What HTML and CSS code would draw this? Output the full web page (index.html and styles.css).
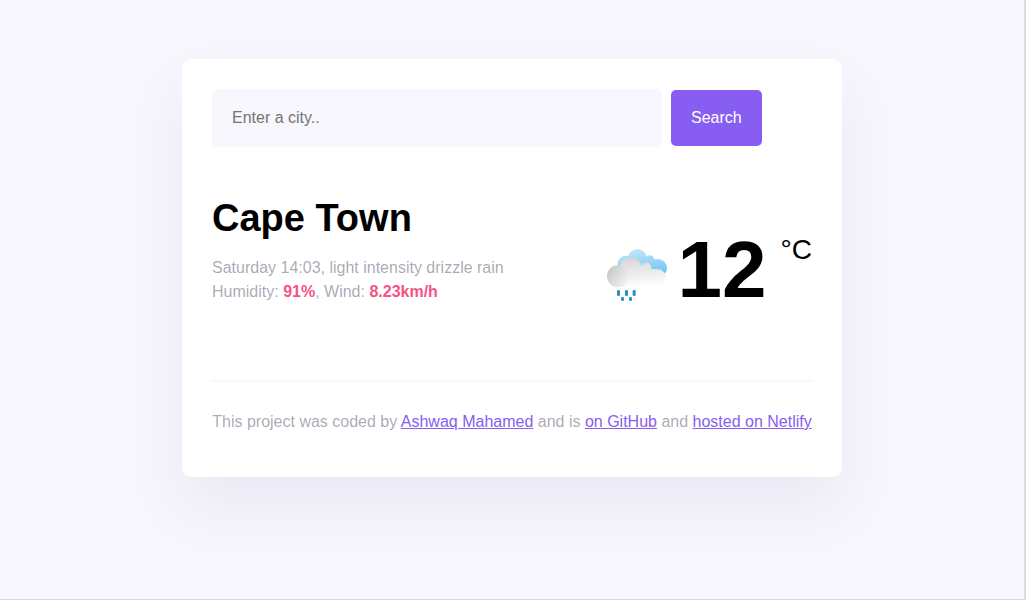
FILE: index.html
```html
<!DOCTYPE html>
<html lang="en">
<head>
<meta charset="utf-8">
<title>Weather App</title>
<link rel="stylesheet" href="styles.css">
</head>
<body>
<div class="weather-app">
  <header>
    <form class="search-form">
      <input type="search" class="search-input" placeholder="Enter a city.." aria-label="City" required>
      <button type="submit" class="search-button">Search</button>
    </form>
  </header>
  <main class="current">
    <div>
      <h1 class="city">Cape Town</h1>
      <p class="details">Saturday 14:03, light intensity drizzle rain<br>Humidity: <strong>91%</strong>, Wind: <strong>8.23km/h</strong></p>
    </div>
    <div class="temperature">
      <svg class="icon" viewBox="30 36 186 162" role="img" aria-label="Rain">
        <defs>
          <linearGradient id="sky" gradientUnits="userSpaceOnUse" x1="115" y1="38" x2="130" y2="124">
            <stop offset="0" stop-color="#c5e6fb"/><stop offset="1" stop-color="#72c4f4"/>
          </linearGradient>
          <linearGradient id="cloud" gradientUnits="userSpaceOnUse" x1="120" y1="64" x2="128" y2="154">
            <stop offset="0" stop-color="#d6d6d6"/><stop offset="1" stop-color="#ffffff"/>
          </linearGradient>
          <linearGradient id="puff" gradientUnits="userSpaceOnUse" x1="42" y1="96" x2="96" y2="134">
            <stop offset="0" stop-color="#c9c9c9"/><stop offset="1" stop-color="#f1f1f1"/>
          </linearGradient>
        </defs>
        <g fill="url(#sky)">
          <circle cx="90" cy="84" r="25"/><circle cx="124" cy="67" r="28"/><circle cx="161" cy="72" r="14"/><circle cx="186" cy="96" r="27"/>
          <path d="M90 70h90v50H90z"/>
        </g>
        <path fill="url(#cloud)" d="M65 154V88h7a34 34 0 0 1 65 2a14 14 0 0 1 28 9h18a27 27 0 0 1 0 55z"/>
        <circle cx="66" cy="121" r="33" fill="url(#puff)"/>
        <g fill="#2b8fca">
          <rect x="63" y="162" width="9" height="18" rx="4"/><rect x="87" y="162" width="9" height="18" rx="4"/><rect x="110" y="162" width="9" height="18" rx="4"/>
          <rect x="75" y="183" width="9" height="12" rx="4"/><rect x="99" y="183" width="9" height="12" rx="4"/>
        </g>
      </svg>
      <span class="value">12</span>
      <span class="unit">°C</span>
    </div>
  </main>
  <footer class="credits">This project was coded by <a href="#author">Ashwaq Mahamed</a> and is <a href="#github">on GitHub</a> and <a href="#netlify">hosted on Netlify</a></footer>
</div>
</body>
</html>
```
FILE: styles.css
```css
* {
  box-sizing: border-box;
}

body {
  margin: 0;
  min-height: 100vh;
  padding: 59px 20px;
  background: #f8f7fe;
  border-right: 2px solid #dfdce0;
  border-bottom: 1px solid #dcdadd;
  font-family: "Liberation Sans", Arial, sans-serif;
  font-size: 16px;
}

.weather-app {
  max-width: 660px;
  margin: 0 auto;
  padding: 30px 30px 0;
  background: #fff;
  border-radius: 10px;
  box-shadow: 0 30px 65px rgba(65, 50, 100, 0.08);
}

.search-form {
  display: flex;
  align-items: center;
  gap: 9px;
}

.search-input {
  width: 75%;
  padding: 20px;
  border: 0;
  border-radius: 6px;
  background: #f8f7fe;
  font: inherit;
  line-height: 18px;
  appearance: none;
}

.search-input::placeholder {
  color: #757575;
}

.search-button {
  padding: 19px 20px;
  border: 0;
  border-radius: 5px;
  background: #885df1;
  color: #fff;
  font: inherit;
  line-height: 18px;
}

.current {
  display: flex;
  justify-content: space-between;
  padding: 49px 0 70px;
}

.city {
  margin: 0;
  font-size: 38px;
  line-height: 44px;
}

.details {
  margin: 16px 0 0;
  color: rgba(39, 33, 66, 0.4);
  line-height: 24px;
}

.details strong {
  color: #f65282;
}

.temperature {
  display: flex;
  align-items: flex-start;
  padding-top: 34px;
}

.icon {
  width: 62px;
  height: 54px;
  margin: 18px 10px 0 0;
}

.value {
  font-size: 80px;
  font-weight: bold;
  line-height: 80px;
}

.unit {
  margin-left: 14px;
  font-size: 28px;
  line-height: 40px;
}

.credits {
  padding: 28px 0 43px;
  border-top: 2px solid #f8f7fe;
  color: rgba(39, 33, 66, 0.4);
  line-height: 24px;
  text-align: center;
}

.credits a {
  color: #885df1;
}
```
